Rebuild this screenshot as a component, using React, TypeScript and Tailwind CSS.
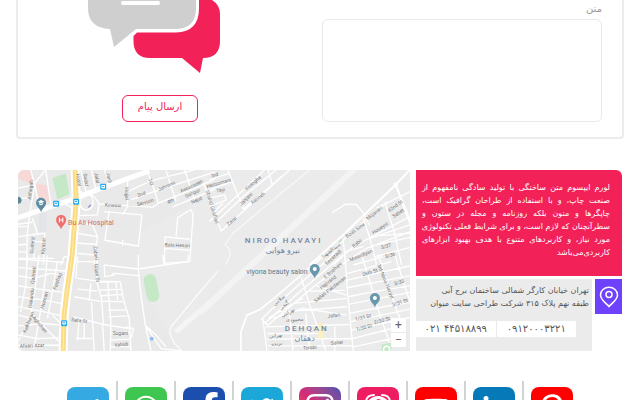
import React from "react";
import {
  FaFacebookF,
  FaInstagram,
  FaLinkedinIn,
  FaPinterestP,
  FaTelegramPlane,
  FaTwitter,
  FaWhatsapp,
  FaYoutube,
} from "react-icons/fa";

const introLines = [
  "لورم ایپسوم متن ساختگی با تولید سادگی نامفهوم از",
  "صنعت چاپ، و با استفاده از طراحان گرافیک است،",
  "چاپگرها و متون بلکه روزنامه و مجله در ستون و",
  "سطرآنچنان که لازم است، و برای شرایط فعلی تکنولوژی",
  "مورد نیاز، و کاربردهای متنوع با هدف بهبود ابزارهای",
];

type StreetLabel = [text: string, x: number, y: number, angle: number];

const streets: StreetLabel[] = [
  ["Ashegah", 31, 190, -84],
  ["Hosni", 80, 180, 82],
  ["Sadaf", 87, 180, 82],
  ["Jalal", 98, 178, 80],
  ["Janfi", 110, 178, 78],
  ["Hojjat", 128, 194, 88],
  ["2nd", 142, 194, -18],
  ["Servizin", 146, 202, -16],
  ["4th", 171, 201, -24],
  ["Jahromi", 167, 186, -24],
  ["Assazadeh", 192, 186, -24],
  ["Golipur", 193, 193, -24],
  ["Nejat", 197, 200, -24],
  ["1st", 152, 182, 75],
  ["Kowsar", 114, 205, 3],
  ["Gudarzi", 33, 245, -86],
  ["Kiyasar", 44, 246, -86],
  ["Zabeti", 97, 253, 84],
  ["Bala Hesari", 178, 245, 2],
  ["Qaimati", 34, 275, -84],
  ["Oskandu", 32, 298, -84],
  ["Hoznari", 45, 300, -74],
  ["Faizhag", 58, 281, -70],
  ["Kalkhuran", 29, 322, -68],
  ["Aghchari", 41, 324, 50],
  ["Afsari Azar", 33, 345, -2],
  ["Safa St", 80, 320, 8],
  ["Gilani St", 98, 273, 84],
  ["Sugani", 121, 333, 0],
  ["Vahidi", 122, 344, -5],
  ["3rd", 215, 175, -14],
  ["Hessomani", 219, 183, -16],
  ["Tayi", 221, 190, -10],
  ["Vosogha", 253, 183, -40],
  ["Janjani", 246, 199, -44],
  ["Astineh", 258, 198, -38],
  ["Zarei", 232, 221, -40],
  ["Shahid Ghaffari", 213, 207, 73],
  ["Mojaveri", 374, 213, -38],
  ["42nd St", 395, 206, -36],
  ["Sabet", 398, 213, -34],
  ["Hoseyni", 380, 228, -34],
  ["Boali Sina", 355, 230, -36],
  ["Rabii", 357, 243, -38],
  ["Masudiyan", 361, 255, -22],
  ["3/37", 386, 246, -16],
  ["3/36", 390, 255, -16],
  ["Rezazadi", 333, 257, -42],
  ["E Boshani", 333, 270, -40],
  ["Hajivand", 328, 282, -38],
  ["Sadati Pakdaman", 330, 289, -38],
  ["26th St", 370, 272, -18],
  ["3rd Niroo Havayi", 386, 281, 68],
  ["3/33", 399, 282, -16],
  ["3/31 St", 400, 302, -18],
  ["Jafari", 334, 315, -8],
  ["1/31 St", 363, 317, -14],
  ["1/30 St", 364, 327, -14],
  ["2/30 St", 382, 320, -16],
  ["Sanei", 337, 342, -4],
  ["Torabi", 310, 347, -4],
  ["سلامی", 279, 300, -40],
  ["گنجی", 284, 305, -42],
  ["بهرامی", 288, 312, -28],
  ["محمودی", 295, 319, -2],
  ["تهرانی", 276, 335, -8],
  ["برنده", 277, 343, -6],
  ["سیدالشهدا", 331, 250, -36],
];

function BusStop({ x, y }: { x: number; y: number }) {
  return (
    <g transform={`translate(${x} ${y})`}>
      <rect x="-3" y="-3" width="6" height="6" rx="1" fill="#27a9f2" />
      <path d="M-1.8-1.7H1.8V1.2H1V2H.5V1.2H-.5V2H-1V1.2H-1.8Z" fill="#fff" />
      <path d="M-1-.9H1V.2H-1Z" fill="#27a9f2" />
    </g>
  );
}

function Pin({ x, y, color, children }: { x: number; y: number; color: string; children?: React.ReactNode }) {
  return (
    <g transform={`translate(${x} ${y})`}>
      <path d="M0 9.5C-.8 6-5 4-5 0A5 5 0 0 1 5 0C5 4 .8 6 0 9.5Z" fill={color} />
      {children ?? <circle r="2" fill="#fff" />}
    </g>
  );
}

function CityMap() {
  return (
    <svg
      viewBox="19 170 391 181"
      preserveAspectRatio="xMidYMid slice"
      className="block h-full w-full [direction:ltr]"
      role="img"
      aria-label="نقشه"
    >
      <rect x="19" y="170" width="391" height="181" fill="#e9e9e9" />
      <path d="M204 170H410V351H180L150 300 140 265 139 235 200 200Z" fill="#ebebeb" />

      {/* north-west quarter */}
      <g transform="translate(15 165) scale(.33333)" fill="none" stroke="#fff" strokeLinejoin="round">
        <path d="M12 15H50L60 60 12 42ZM63 55 98 62 108 113 76 108Z" fill="#f6d9d6" stroke="none" />
        <path d="M115 40 155 26 166 88 130 103Z" fill="#c5e8c6" stroke="none" />
        <path d="M76 145H98V200H72Z" fill="#e2e4e8" stroke="none" />
        <path
          strokeWidth="4"
          d="M50 15 62 60 48 140 40 205 38 300M12 70 60 60M62 55 95 15M62 55 72 110M95 15 110 118M45 100H12M200 15 218 90M232 15 245 75M270 15 290 62M340 42V125L325 150M400 22 418 70 432 115 415 127 255 117 250 150 198 152M255 117 240 95M240 95 205 85 190 75M218 85C190 82 188 135 218 136 245 130 240 90 218 85M145 112 175 130M345 78 410 48 540 15M350 105 420 80 600 22M432 115 520 80 600 44M475 126 600 74M455 18 485 110M510 15 540 104M565 50 600 135M580 100 600 140M270 140 383 150 372 244 272 226 285 138M274 226 370 243M325 225V242M490 158 530 134 536 150 526 290 450 295 452 216 526 223M490 158 485 214M450 250 526 256M12 178 55 172M12 215 92 205 88 300M55 160 70 205M12 240 40 238M12 260 40 262M12 280H120M58 205 60 280M92 230H60M40 185H12M200 175 235 180 250 215 240 300M190 205 252 216M192 235 245 238M190 265 240 270M190 290H240M140 300 150 275 185 280"
        />
        <path d="M158 108 170 104M222 128 230 120" stroke="#9a9fd0" strokeWidth="5" />
      </g>

      {/* south-west quarter */}
      <g transform="translate(15 255) scale(.33333)" fill="none" stroke="#fff" strokeLinejoin="round">
        <path
          strokeWidth="4"
          d="M12 12 150 22M12 38 155 48M12 62 60 70 110 55 155 62M12 92 60 100 145 112M12 125 70 132 140 145M12 155 80 168 145 182M12 180 55 190M12 212 90 205 140 210M12 240 70 250 138 248M12 270H138M40 0 35 90 20 170M75 0 62 110 50 180 12 260M100 0 95 60 80 165 60 280M130 20 115 110 100 190M60 180 100 225 138 262M115 180 140 205M372 0V42L378 105 393 210 440 280 500 287M393 210 410 288M393 210 425 240 455 275M270 30 372 42 450 30 520 20 522 0M450 30 445 0M270 30 272 65 300 60M290 62 300 55 372 62M190 5 185 70M190 70 250 78 318 80 328 135 345 190 350 288M250 0 247 78 262 130 268 210M245 82 280 80 290 200 288 288M230 85 225 138M180 125 255 138 325 140M190 102 250 108M255 105 320 103M260 122 325 118M280 165H335M282 185 340 182M178 185 268 208 345 220M195 190 190 255M210 190V250M232 140 240 288M265 208 270 288M290 235 348 230M290 255 350 252M290 275 350 275M185 250H240M335 215 358 220 350 250M305 80 310 135"
        />
        <path strokeWidth="15" stroke="#f5f5f5" d="M484 230 610 122" />
        <path strokeWidth="3" d="M610 48 540 130 470 215 466 235 478 262 505 290" />
        <path d="M407 76 416 122" stroke="#c5e8c6" strokeWidth="38" strokeLinecap="round" />
        <circle cx="412" cy="251" r="6" fill="#8fbdf0" stroke="none" />
      </g>

      {/* north-east quarter */}
      <g transform="translate(210 165) scale(.33333)" fill="none" stroke="#fff" strokeLinejoin="round">
        <path strokeWidth="19" stroke="#f3f3f3" d="M-30 444 125 300 435 12" />
        <path strokeWidth="3" stroke="#f8fafc" d="M48 300 62 268 58 250 46 240 70 205 160 130 300 15" />
        <path
          strokeWidth="4"
          d="M55 15 80 80 102 132M0 98 15 145 35 198 100 140 240 15M20 172 95 100 200 15M0 170 80 95 150 30 165 15M102 132 188 60 175 15M188 60 215 35M0 45 60 25M0 75 70 50M0 100 45 90 50 105 0 125M10 145 40 115M367 143 408 118 440 119 465 150 478 180"
        />
        <path strokeWidth="6" d="M300 300 400 210 557 60 590 140 610 210M557 60 600 15" />
        <path
          strokeWidth="4"
          d="M345 300 400 225 480 155 530 112M400 225 408 300M460 160 480 220 500 300M525 112 550 190 575 300M370 300 430 245 600 155M400 295 470 250 600 200M480 220 600 180M405 260 460 245M500 240 610 215M495 275 610 245M510 212 600 205M500 130 600 80M570 100 600 175"
        />
        <circle cx="557" cy="60" r="5" strokeWidth="4" />
      </g>

      {/* south-east quarter */}
      <g transform="translate(210 255) scale(.33333)" fill="none" stroke="#fff" strokeLinejoin="round">
        <path strokeWidth="5" d="M94 288V230L112 180 150 164 180 140 345 0" />
        <path
          strokeWidth="4"
          d="M155 192 220 130 370 0M165 205 270 110 400 0M155 192 175 210 300 105 405 22M405 0 412 100 430 288M275 68 300 150 325 220 348 288M160 192 172 288M178 188 260 140 280 130M168 215 420 208M172 235H330M172 252 425 250M175 272 430 272M190 190 280 160 410 180M215 170 412 155M250 145 412 130M300 108 405 106M318 92 410 120M430 30 520 5M412 55 545 20M412 75 610 30M412 98 610 60M415 125 480 112 610 90M415 148 610 110M418 175 520 155 610 140M420 200 610 160M425 225 610 185M428 250 545 220M430 275 545 250M455 0 480 80 510 180 535 250 545 288M505 0 540 110 570 190M555 0 580 80 610 170M240 180 250 288M288 175 300 288M375 215V288"
        />
        <path d="M515 268 545 262 545 288H515Z" fill="#c5e8c6" stroke="none" />
        <path d="M325 205H340V250H325Z" fill="#fbefc4" stroke="none" />
        <circle cx="530" cy="282" r="9" strokeWidth="4" />
      </g>
      <path d="M339 241 342 238 342 241 339 243Z" fill="#bfe5bf" />

      {/* arterial roads */}
      <path d="M19 218 42 210 75 199 103 188 150 171" fill="none" stroke="#fff" strokeWidth="5" />
      <path d="M76 170 77 202 73 255 68 290 65 315 64 351" fill="none" stroke="#fff" strokeWidth="9" />
      <path d="M76 170 77 202 73 255 68 290 65 315 64 351" fill="none" stroke="#fbdc82" strokeWidth="5" />
      <path d="M76 170 77 202 73 255 68 290 65 315 64 351" fill="none" stroke="#fdeab0" strokeWidth="1" />

      <g fontFamily="Roboto, 'DejaVu Sans', sans-serif" fontSize="5" fill="#777" textAnchor="middle">
        {streets.map(([text, x, y, angle]) => (
          <text key={`${text}-${x}`} x={x} y={y + 2} transform={`rotate(${angle} ${x} ${y})`}>
            {text}
          </text>
        ))}
      </g>

      <BusStop x={104} y={187} />
      <BusStop x={77} y={202} />
      <BusStop x={57} y={204} />
      <BusStop x={65} y={323} />

      <path d="M19 197a3 3 0 0 1 0 7Z" fill="#5c8799" />
      <Pin x={42} y={203} color="#5e8ca4">
        <path d="M-3.3-1.2 0-2.8 3.3-1.2 0 .4ZM-2 .2V1.5L0 2.5 2 1.5V.2L0 1.2Z" fill="#fff" />
      </Pin>
      <Pin x={62} y={220} color="#ee6f6e">
        <path d="M-1.7-2.5V2.5M1.7-2.5V2.5M-1.7 0H1.7" stroke="#fff" strokeWidth="1" />
      </Pin>
      <Pin x={315} y={269} color="#6997ac" />
      <Pin x={375} y={298} color="#6997ac" />

      <g fontFamily="Roboto, 'DejaVu Sans', sans-serif">
        <text x="69" y="225" fontSize="7" fill="#d2696b">
          Bu Ali Hospital
        </text>
        <text x="308" y="274" fontSize="7" fill="#557e91" textAnchor="end">
          viyona beauty salon
        </text>
        <g fill="#7286a3" textAnchor="middle">
          <text x="284" y="243" fontSize="8" fontWeight="500" className="tracking-[2px]">
            NIROO HAVAYI
          </text>
          <text x="283" y="253" fontSize="8">
            نیرو هوایی
          </text>
          <text x="307" y="331" fontSize="8" fontWeight="500" className="tracking-[2px]">
            DEHQAN
          </text>
          <text x="305" y="341" fontSize="8">
            دهقان
          </text>
        </g>
      </g>
    </svg>
  );
}

function ChatBubbles() {
  return (
    <svg viewBox="87 0 144 74" className="block h-[74px] w-36 [direction:ltr]" aria-hidden="true">
      <path
        d="M198 0H211Q219 5 219 14V41Q219 58 202 58L199 73 181 58H149Q132.500 58 132.500 41V36L136 32.500H175Q198 32 198 8Z"
        fill="#f22259"
      />
      <path d="M87 0H195V8Q195 29 174 29H135L113 47 109 29Q87 28 87 8Z" fill="#cfcfcf" />
      <rect x="120" y="1" width="39" height="4" rx="2" fill="#fff" />
    </svg>
  );
}

function SwirlGlyph() {
  return (
    <svg viewBox="0 0 32 32" className="size-8" fill="none" stroke="#fff" strokeLinecap="round" aria-hidden="true">
      <path d="M4 9Q5 3 12 3M28 9Q27 3 20 3" strokeWidth="2" />
      <path d="M5 12Q16-1 27 12Q32 24 16 29Q0 24 5 12Z" strokeWidth="3" />
      <path d="M8 9Q14 6 16 10Q21 6 25 10" strokeWidth="2" />
    </svg>
  );
}

const networks = [
  { name: "Telegram", color: "bg-[#35a9e1]", icon: <FaTelegramPlane className="size-6" /> },
  { name: "WhatsApp", color: "bg-[#3fc651]", icon: <FaWhatsapp className="size-7" /> },
  { name: "Facebook", color: "bg-[#1b4ead]", icon: <FaFacebookF className="ms-2.5 size-8" /> },
  { name: "Twitter", color: "bg-[#1ba7d7]", icon: <FaTwitter className="size-6" /> },
  {
    name: "Instagram",
    color: "bg-linear-to-tr from-[#f9593a] via-[#d02a78] to-[#4b4cb0]",
    icon: <FaInstagram className="size-8" />,
  },
  { name: "Aparat", color: "bg-[#ee1d62]", icon: <SwirlGlyph /> },
  { name: "YouTube", color: "bg-[#fe0000]", icon: <FaYoutube className="size-7" /> },
  { name: "LinkedIn", color: "bg-[#0679b9]", icon: <FaLinkedinIn className="size-6" /> },
  { name: "Pinterest", color: "bg-[#fe0000]", icon: <FaPinterestP className="size-7" /> },
];

export default function App() {
  return (
    <div
      dir="rtl"
      lang="fa"
      className="h-screen overflow-hidden bg-white font-['DejaVu_Sans',sans-serif] text-[#555]"
    >
      <form
        className="mx-4 grid grid-cols-[279fr_243fr] gap-10 rounded-b border-x-2 border-b-2 border-[#ececec] px-5 pb-[15px]"
        onSubmit={(e) => e.preventDefault()}
      >
        <div className="flex flex-col">
          <label htmlFor="message" className="mb-0.5 h-[17px] text-[10px] leading-[17px] text-[#999]">
            متن
          </label>
          <textarea
            id="message"
            className="h-[103px] w-full resize-none rounded-md border border-[#e9e9e9] p-2 text-[10px] outline-none"
          />
        </div>
        <div className="flex flex-col items-center justify-between">
          <ChatBubbles />
          <button
            type="submit"
            className="h-[27px] w-[76px] rounded-md border border-[#f22259] pb-1 text-[10px] text-[#f22259]"
          >
            ارسال پیام
          </button>
        </div>
      </form>

      <section className="mx-[18px] mt-[31px] flex gap-1.5">
        <div className="w-[206px] shrink-0">
          <div className="h-[106px] rounded-tr-md bg-[#f22259] pt-[11px] pr-3 pl-1.5 text-[8px] leading-[13px] text-white">
            {introLines.map((line) => (
              <p key={line} className="whitespace-nowrap [text-align-last:justify]">
                {line}
              </p>
            ))}
            <p>کاربردی‌می‌باشد</p>
          </div>
          <div className="mt-[3px] flex gap-[3px]">
            <div className="flex h-[35px] w-[27px] shrink-0 items-center justify-center bg-[#6e41fc]">
              <svg viewBox="0 0 20 22" className="h-[22px] w-5" fill="none" stroke="#fff" strokeWidth="1.5" aria-hidden="true">
                <path d="M10 20.500C7.500 17.500 1.500 14 1.500 9A8.500 7.700 0 0 1 18.500 9C18.500 14 12.500 17.500 10 20.500Z" />
                <circle cx="10" cy="8.500" r="3" />
              </svg>
            </div>
            <address className="h-[72px] flex-1 bg-[#ebebeb] pt-[5px] not-italic">
              <p className="whitespace-nowrap px-[3px] text-[8px] leading-[13px]">
                تهران خیابان کارگر شمالی ساختمان برج آبی
                <br />
                طبقه نهم پلاک ۳۱۵ شرکت طراحی سایت میوان
              </p>
              <div className="ms-4 mt-[11px] flex gap-px text-[10px] leading-4">
                <a href="tel:09120003221" className="h-4 flex-1 bg-white text-center">
                  ۰۹۱۲۰۰۰۳۲۲۱
                </a>
                <a href="tel:02144518899" className="h-4 flex-1 bg-white text-center">
                  ۰۲۱&nbsp;۴۴۵۱۸۸۹۹
                </a>
              </div>
            </address>
          </div>
        </div>
        <div className="relative h-[181px] flex-1 overflow-hidden rounded-l-md">
          <CityMap />
          <div
            dir="ltr"
            className="absolute right-1 bottom-1 flex w-[15px] flex-col gap-px font-['Roboto',sans-serif] text-[12px] leading-[14px] text-[#666]"
          >
            <button type="button" aria-label="بزرگ‌نمایی" className="h-3.5 bg-white">
              +
            </button>
            <button type="button" aria-label="کوچک‌نمایی" className="h-3.5 bg-white">
              −
            </button>
          </div>
        </div>
      </section>

      <nav dir="ltr" aria-label="شبکه‌های اجتماعی" className="mt-[30px] flex justify-between px-[67px]">
        {networks.map(({ name, color, icon }, i) => (
          <React.Fragment key={name}>
            {i > 0 && <span className="h-[54px] w-0.5 bg-[#d2d2d2]" />}
            <a
              href={`#${name.toLowerCase()}`}
              aria-label={name}
              className={`mt-1.5 flex size-[42px] items-center justify-center rounded-lg text-white ${color}`}
            >
              {icon}
            </a>
          </React.Fragment>
        ))}
      </nav>
    </div>
  );
}
